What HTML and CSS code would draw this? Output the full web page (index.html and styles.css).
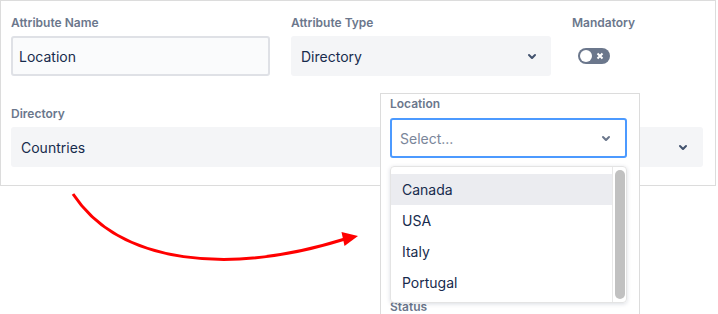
FILE: index.html
```html
<!DOCTYPE html>
<html lang="en">
<head>
    <meta charset="UTF-8">
    <title>Attribute</title>
    <link rel="stylesheet" href="styles.css">
</head>
<body>

    <div class="panel">
        <div class="row">
            <div class="field name-field">
                <label class="label">Attribute Name</label>
                <div class="input">Location</div>
            </div>
            <div class="field type-field">
                <label class="label">Attribute Type</label>
                <div class="select">
                    <span>Directory</span>
                    <svg class="chevron" viewBox="0 0 24 24" width="24" height="24"><path d="M8.292 10.293a1.009 1.009 0 000 1.419l2.939 2.965c.218.215.5.322.779.322s.556-.107.769-.322l2.93-2.955a1.01 1.01 0 000-1.419.987.987 0 00-1.406 0l-2.298 2.317-2.307-2.327a.99.99 0 00-1.406 0z"/></svg>
                </div>
            </div>
            <div class="field">
                <label class="label">Mandatory</label>
                <div class="toggle-wrap">
                    <div class="toggle">
                        <span class="knob"></span>
                        <svg class="cross" viewBox="0 0 8 8" width="8" height="8"><path d="M1.5 1.5l5 5M6.5 1.5l-5 5"/></svg>
                    </div>
                </div>
            </div>
        </div>

        <div class="field dir-field">
            <label class="label">Directory</label>
            <div class="select">
                <span>Countries</span>
                <svg class="chevron" viewBox="0 0 24 24" width="24" height="24"><path d="M8.292 10.293a1.009 1.009 0 000 1.419l2.939 2.965c.218.215.5.322.779.322s.556-.107.769-.322l2.93-2.955a1.01 1.01 0 000-1.419.987.987 0 00-1.406 0l-2.298 2.317-2.307-2.327a.99.99 0 00-1.406 0z"/></svg>
            </div>
        </div>
    </div>

    <!-- preview of the generated form, lies over the panel -->
    <div class="preview">
        <label class="label">Location</label>
        <div class="select focused">
            <span class="placeholder">Select...</span>
            <svg class="chevron light" viewBox="0 0 24 24" width="24" height="24"><path d="M8.292 10.293a1.009 1.009 0 000 1.419l2.939 2.965c.218.215.5.322.779.322s.556-.107.769-.322l2.93-2.955a1.01 1.01 0 000-1.419.987.987 0 00-1.406 0l-2.298 2.317-2.307-2.327a.99.99 0 00-1.406 0z"/></svg>
        </div>
        <div class="menu">
            <ul class="options">
                <li class="active">Canada</li>
                <li>USA</li>
                <li>Italy</li>
                <li>Portugal</li>
            </ul>
            <div class="track"><div class="thumb"></div></div>
        </div>
        <label class="label status">Status</label>
    </div>

    <svg class="arrow" width="718" height="314" viewBox="0 0 718 314">
        <path d="M73 194 C 120 265, 230 275, 345 239" fill="none" stroke="#ff0000" stroke-width="3"/>
        <polygon points="358,236 344.5,246 341.5,232" fill="#ff0000"/>
    </svg>

</body>
</html>
```

FILE: styles.css
```css
body {
    margin: 0;
    background: #fff;
    font-family: Inter, "Noto Sans", sans-serif;
    color: #172b4d;
    position: relative;
    height: 314px;
    overflow: hidden;
}
.panel {
    width: 692px;
    padding: 14px 12px 18px 10px;
    border: 1px solid #dcdcdc;
    background: #fff;
}
.row {
    display: grid;
    grid-template-columns: 259px 260px 1fr;
    column-gap: 21px;
}
.field {
    display: flex;
    flex-direction: column;
}
.label {
    display: block;
    font-size: 12px;
    font-weight: 600;
    line-height: 16px;
    color: #6b778c;
    margin-bottom: 5px;
}
.input {
    box-sizing: border-box;
    height: 40px;
    padding: 0 6px;
    display: flex;
    align-items: center;
    font-size: 14px;
    background: #fafbfc;
    border: 2px solid #dfe1e6;
    border-radius: 3px;
}
.select {
    height: 40px;
    box-sizing: border-box;
    padding: 0 7px 0 10px;
    display: flex;
    align-items: center;
    justify-content: space-between;
    font-size: 14px;
    background: #f4f5f7;
    border-radius: 3px;
}
.chevron {
    fill: #42526e;
}
.chevron.light {
    fill: #6b778c;
}
.toggle-wrap {
    height: 40px;
    display: flex;
    align-items: center;
    padding-left: 6px;
}
.toggle {
    width: 32px;
    height: 16px;
    border-radius: 8px;
    background: #6b778c;
    display: flex;
    align-items: center;
    justify-content: space-between;
    padding: 0 6px 0 2px;
    box-sizing: border-box;
}
.knob {
    width: 12px;
    height: 12px;
    border-radius: 50%;
    background: #fff;
}
.cross {
    stroke: #fff;
    stroke-width: 2;
}
.dir-field {
    margin-top: 30px;
}
.dir-field .select {
    padding-left: 10px;
    padding-right: 8px;
}
.preview {
    position: absolute;
    left: 380px;
    top: 93px;
    width: 237px;
    height: 240px;
    padding: 2px 12px 0 9px;
    background: #fff;
    border: 1px solid #dcdcdc;
}
.preview .label {
    margin-bottom: 6px;
}
.select.focused {
    background: #fff;
    border: 2px solid #4c9aff;
    padding-left: 8px;
    padding-right: 7px;
}
.placeholder {
    color: #7a869a;
}
.menu {
    margin-top: 8px;
    display: flex;
    border: 1px solid #e4e4e4;
    border-radius: 4px;
    box-shadow: 0 1px 4px rgba(9, 30, 66, 0.15);
    overflow: hidden;
    position: relative;
}
.options {
    flex: 1;
    list-style: none;
    margin: 0;
    padding: 7px 0 4px;
}
.options li {
    height: 31px;
    line-height: 31px;
    padding-left: 11px;
    font-size: 14px;
}
.options li.active {
    background: #ebecf0;
}
.track {
    width: 13px;
    border-left: 1px solid #e8e8e8;
    padding: 3px 0;
    display: flex;
    justify-content: center;
}
.thumb {
    width: 10px;
    border-radius: 5px;
    background: #c1c1c1;
}
.status {
    margin-top: -4px;
}
.arrow {
    position: absolute;
    left: 0;
    top: 0;
    pointer-events: none;
}
```
